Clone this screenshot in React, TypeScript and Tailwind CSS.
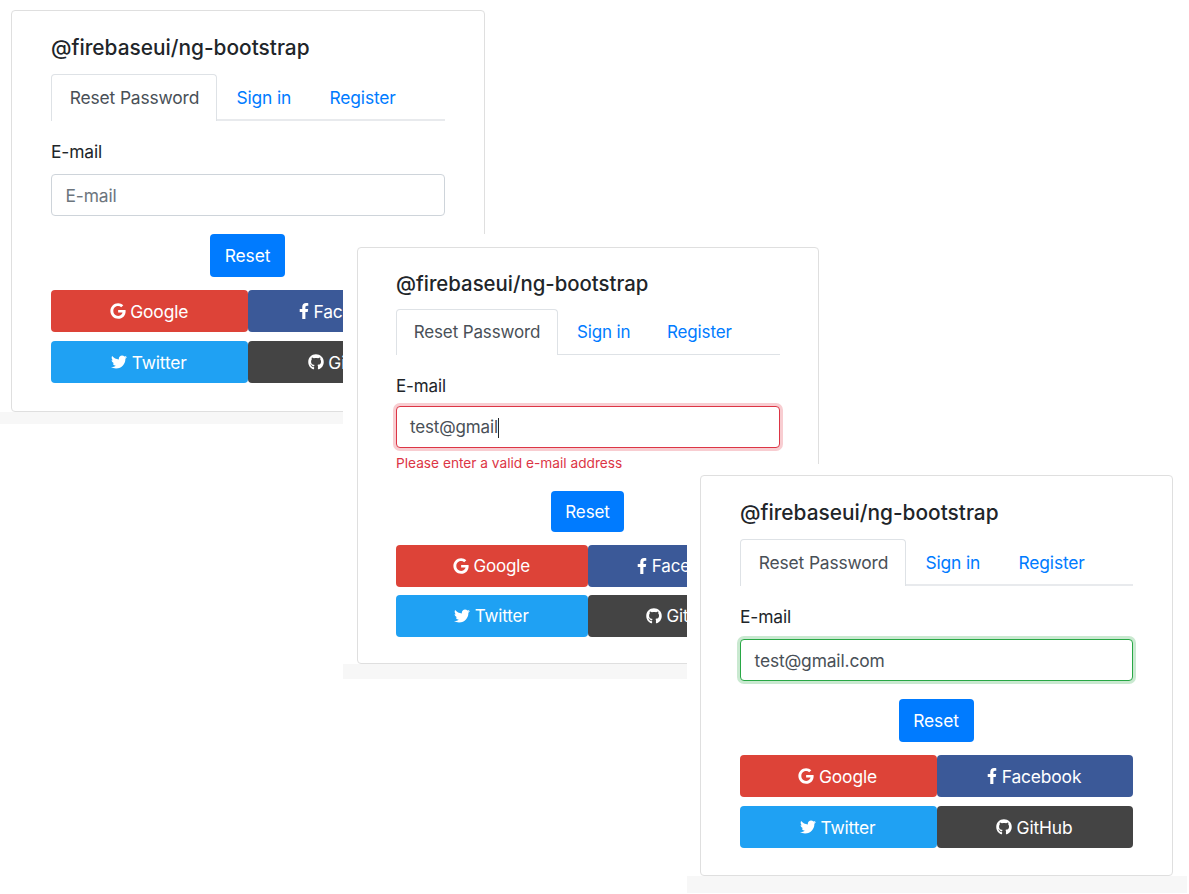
import { FaFacebookF, FaGithub, FaGoogle, FaTwitter } from "react-icons/fa";
import clsx from "clsx";

type Status = "empty" | "invalid" | "valid";

interface Sizes {
  title: string;
  body: string;
  tabs: string;
  activeTab: string;
  rule: string;
  signIn: string;
  register: string;
  label: string;
  input: string;
  reset: string;
  providers: string;
  provider: string;
}

const regular: Sizes = {
  title: "h-[24px] text-[20.85px] leading-[24px]",
  body: "text-[17.4px] tracking-[-0.14px]",
  tabs: "mt-[14px] h-[47px]",
  activeTab: "w-[166px] pl-px",
  rule: "border-b-2 border-[#e8eaed]",
  signIn: "ml-[19.5px] w-[93px]",
  register: "w-[80px]",
  label: "mt-[19px] h-[24px] leading-[24px]",
  input: "mt-[10px] h-[42px] px-[13.5px]",
  reset: "mt-[18px] h-[43px] w-[75px]",
  providers: "mt-[13px] gap-y-[9px]",
  provider: "h-[42px]",
};

const compact: Sizes = {
  title: "h-[24px] text-[20.35px] leading-[24px]",
  body: "text-[17px] tracking-[-0.14px]",
  tabs: "mt-[13px] h-[46px]",
  activeTab: "w-[162px]",
  rule: "border-b border-[#dee2e6]",
  signIn: "ml-[19px] w-[90px]",
  register: "w-[80px]",
  label: "mt-[18px] h-[24px] leading-[26px]",
  input: "mt-[9px] h-[42px] px-[13px]",
  reset: "mt-[18px] h-[41px] w-[73px]",
  providers: "mt-[13px] gap-y-[8px]",
  provider: "h-[42px]",
};

const fieldStyles: Record<Status, string> = {
  empty: "border-[#ced4da] text-[#6c757d]",
  invalid: "border-[#dc3545] text-[#495057] ring-3 ring-[#f8cdd1]",
  valid: "border-[#28a745] text-[#495057] ring-3 ring-[#c9e9d0]",
};

const providers = [
  { name: "Google", Icon: FaGoogle, color: "bg-[#dd4338]", icon: "w-[16px]" },
  { name: "Facebook", Icon: FaFacebookF, color: "bg-[#3b5998]", icon: "w-[10px]" },
  { name: "Twitter", Icon: FaTwitter, color: "bg-[#1fa1f3]", icon: "w-[16px]" },
  { name: "GitHub", Icon: FaGithub, color: "bg-[#444444]", icon: "w-[16px]" },
];

interface ResetCardProps {
  sizes: Sizes;
  status: Status;
  value: string;
  className: string;
}

function ResetCard({ sizes, status, value, className }: ResetCardProps) {
  return (
    <section className={clsx("flex flex-col rounded-[4px] border border-[#dfdfdf] bg-white", sizes.body, className)}>
      <h5 className={clsx("font-medium tracking-normal whitespace-nowrap text-[#212529]", sizes.title)}>
        @firebaseui/ng-bootstrap
      </h5>

      <nav className={clsx("flex shrink-0", sizes.tabs)}>
        <a className={clsx("flex items-center justify-center rounded-t-[4px] border border-b-0 border-[#dee2e6] whitespace-nowrap text-[#495057]", sizes.activeTab)}>
          Reset Password
        </a>
        <div className={clsx("flex flex-1 items-center pt-[3px] whitespace-nowrap text-[#007bff]", sizes.rule)}>
          <a className={sizes.signIn}>Sign in</a>
          <a className={sizes.register}>Register</a>
        </div>
      </nav>

      <label className={clsx("text-[#212529]", sizes.label)}>E-mail</label>
      <div className={clsx("flex shrink-0 items-center rounded-[4px] border bg-white pt-[2px]", sizes.input, fieldStyles[status])}>
        <span>{value}</span>
        {status === "invalid" && <span className="h-[20px] w-px bg-[#212529]" />}
      </div>
      {status === "invalid" && (
        <p className="mt-[5px] h-[20px] text-[13.7px] leading-[20px] tracking-normal whitespace-nowrap text-[#dc3545]">
          Please enter a valid e-mail address
        </p>
      )}

      <button className={clsx("-ml-px shrink-0 self-center rounded-[4px] bg-[#007bff] pt-[2px] text-white", sizes.reset)}>
        Reset
      </button>

      <div className={clsx("grid grid-cols-2", sizes.providers)}>
        {providers.map(({ name, Icon, color, icon }) => (
          <button
            key={name}
            className={clsx("flex items-center justify-center gap-[4.5px] rounded-[4px] pt-[2px] pr-px text-white", sizes.provider, color)}
          >
            <Icon className={clsx("-mt-[2px] h-[16px]", icon)} />
            {name}
          </button>
        ))}
      </div>
    </section>
  );
}

export default function App() {
  return (
    <main className="relative h-[894px] w-[1189px] overflow-hidden bg-white font-['Inter',sans-serif]">
      <div className="absolute top-0 left-0 flex h-[424px] w-[500px] flex-col bg-white pt-[10px] pl-[11px]">
        <ResetCard sizes={regular} status="empty" value="E-mail" className="h-[402px] w-[474px] px-[39px] pt-[25px]" />
        <div className="-ml-[11px] flex-1 bg-[#f7f7f7]" />
      </div>
      <div className="absolute top-[234px] left-[343px] flex h-[445px] w-[490px] flex-col bg-white pt-[13px] pl-[14px]">
        <ResetCard sizes={compact} status="invalid" value="test@gmail" className="h-[417px] w-[462px] px-[38px] pt-[24px]" />
        <div className="-ml-[14px] flex-1 bg-[#f7f7f7]" />
      </div>
      <div className="absolute top-[464px] left-[687px] flex h-[429px] w-[500px] flex-col bg-white pt-[11px] pl-[13px]">
        <ResetCard sizes={regular} status="valid" value="test@gmail.com" className="h-[401px] w-[473px] px-[39px] pt-[25px]" />
        <div className="-ml-[13px] flex-1 bg-[#f7f7f7]" />
      </div>
    </main>
  );
}
